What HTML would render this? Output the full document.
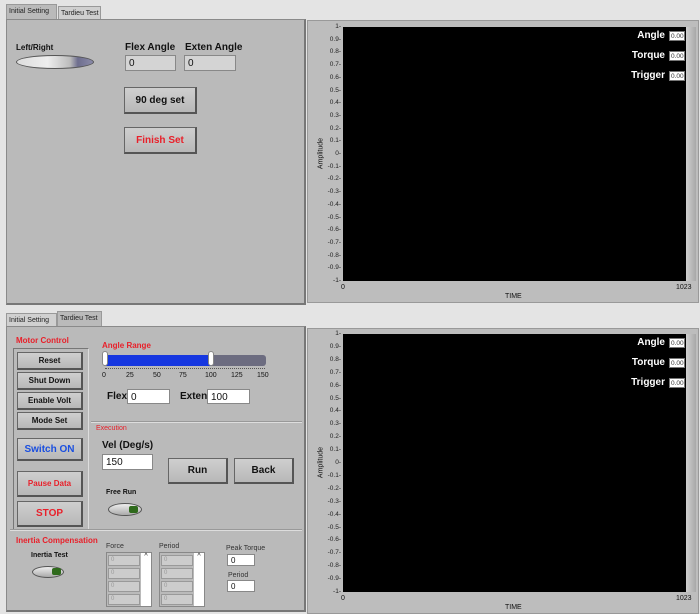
<!DOCTYPE html>
<html><head><meta charset="utf-8"><style>
*{box-sizing:border-box;margin:0;padding:0}
body{width:700px;height:614px;background:#e4e4e4;position:relative;overflow:hidden;font-family:"Liberation Sans",sans-serif;color:#111}
.a{position:absolute}
.panel{position:absolute;background:#bababa;border:1px solid #8a8a8a;border-right:2px solid #777;border-bottom:2px solid #777}
.tab{position:absolute;font-size:7px;padding:3px 2px;border:1px solid #999;border-bottom:none;background:#d0d0d0;color:#222;white-space:nowrap;overflow:hidden}
.tab.on{background:#bababa}
.btn{position:absolute;background:linear-gradient(#cfcfcf,#b8b8b8);border:1px solid #666;border-right:2px solid #555;border-bottom:2px solid #555;font-weight:bold;display:flex;align-items:center;justify-content:center;font-size:9px}
.inp{position:absolute;background:#fff;border:1px solid #888;font-size:10px;padding:1px 3px;line-height:14px}
.lbl{position:absolute;font-weight:bold;font-size:10px;white-space:nowrap}
.red{color:#e8202a}
.graph{position:absolute;background:#bdbdbd;border:1px solid #999}
.plot{position:absolute;background:#000}
.yt{position:absolute;font-size:6.5px;color:#222;text-align:right;width:30px}
.leg{position:absolute;color:#fff;font-weight:bold;font-size:10px;text-align:right;width:60px}
.lv{position:absolute;background:#fff;border:1px solid #777;font-size:6.5px;width:16px;height:10px;line-height:9px;padding-left:1px;color:#333}
.toggle{position:absolute;border-radius:50%;border:1px solid #555;background:linear-gradient(#eee,#aaa)}
.arr{position:absolute;background:#ccc;border:1px solid #999;font-size:6px;color:#999;padding-left:2px;line-height:9px;height:11px}
</style></head><body>

<!-- top tabs -->
<div class="tab on" style="left:6px;top:4px;width:51px;height:16px;">Initial Setting</div>
<div class="tab" style="left:58px;top:6px;width:43px;height:13px;">Tardieu Test</div>
<div class="panel" style="left:6px;top:19px;width:300px;height:286px;"></div>
<div class="lbl" style="left:16px;top:43px;font-size:8px">Left/Right</div>
<div class="toggle" style="left:16px;top:55px;width:78px;height:14px;background:linear-gradient(90deg,#ddd 0%,#eee 40%,#bbb 70%,#6e6e8e 80%,#8a8aa8 100%)"></div>
<div class="lbl" style="left:125px;top:42px;">Flex Angle</div>
<div class="lbl" style="left:185px;top:42px;">Exten Angle</div>
<div class="inp" style="left:125px;top:55px;width:51px;height:16px;background:#d4d4d4">0</div>
<div class="inp" style="left:184px;top:55px;width:52px;height:16px;background:#d4d4d4">0</div>
<div class="btn" style="left:124px;top:87px;width:73px;height:27px;font-size:10px">90 deg set</div>
<div class="btn red" style="left:124px;top:127px;width:73px;height:27px;font-size:10px">Finish Set</div>

<!-- bottom tabs -->
<div class="tab" style="left:6px;top:313px;width:51px;height:13px;">Initial Setting</div>
<div class="tab on" style="left:57px;top:311px;width:45px;height:16px;">Tardieu Test</div>
<div class="panel" style="left:6px;top:326px;width:300px;height:286px;"></div>
<div class="lbl red" style="left:16px;top:336px;font-size:8px">Motor Control</div>
<div class="a" style="left:13px;top:348px;width:76px;height:183px;border:1px solid #777;border-right-color:#ddd;border-bottom-color:#ddd"></div>
<div class="btn" style="left:17px;top:352px;width:66px;height:18px;font-size:8px">Reset</div>
<div class="btn" style="left:17px;top:372px;width:66px;height:18px;font-size:8px">Shut Down</div>
<div class="btn" style="left:17px;top:392px;width:66px;height:18px;font-size:8px">Enable Volt</div>
<div class="btn" style="left:17px;top:412px;width:66px;height:18px;font-size:8px">Mode Set</div>
<div class="btn" style="left:17px;top:438px;width:66px;height:23px;color:#1a4fe0;font-size:10px">Switch ON</div>
<div class="btn red" style="left:17px;top:471px;width:66px;height:26px;font-size:8px">Pause Data</div>
<div class="btn red" style="left:17px;top:501px;width:66px;height:26px;font-size:10px">STOP</div>

<div class="lbl red" style="left:102px;top:341px;font-size:8px">Angle Range</div>
<div class="a" style="left:104px;top:355px;width:162px;height:11px;background:#6c6c80;border-radius:3px"></div>
<div class="a" style="left:104px;top:355px;width:107px;height:11px;background:#1637e0;border-radius:3px 0 0 3px"></div>
<div class="a" style="left:102px;top:351px;width:6px;height:15px;background:#fff;border-radius:3px;border:1px solid #888"></div>
<div class="a" style="left:208px;top:351px;width:6px;height:15px;background:#fff;border-radius:3px;border:1px solid #888"></div>
<div class="a" style="left:105px;top:368px;width:160px;border-top:1px dotted #555;height:2px"></div>
<div class="a" style="left:102px;top:372px;font-size:7px;width:170px;height:10px">
<span class="a" style="left:0">0</span><span class="a" style="left:24px">25</span><span class="a" style="left:51px">50</span><span class="a" style="left:77px">75</span><span class="a" style="left:103px">100</span><span class="a" style="left:129px">125</span><span class="a" style="left:155px">150</span></div>
<div class="lbl" style="left:107px;top:391px;">Flex</div>
<div class="inp" style="left:127px;top:389px;width:43px;height:15px">0</div>
<div class="lbl" style="left:180px;top:391px;">Exten</div>
<div class="inp" style="left:207px;top:389px;width:43px;height:15px">100</div>
<div class="a" style="left:91px;top:421px;width:211px;border-top:1px solid #999;border-bottom:1px solid #ddd"></div>
<div class="lbl red" style="left:96px;top:425px;font-size:7px;font-weight:normal">Execution</div>
<div class="lbl" style="left:102px;top:440px;">Vel (Deg/s)</div>
<div class="inp" style="left:102px;top:454px;width:51px;height:16px">150</div>
<div class="btn" style="left:168px;top:458px;width:60px;height:26px;font-size:10px">Run</div>
<div class="btn" style="left:234px;top:458px;width:60px;height:26px;font-size:10px">Back</div>
<div class="lbl" style="left:106px;top:489px;font-size:7px">Free Run</div>
<div class="toggle" style="left:108px;top:503px;width:34px;height:13px"></div>
<div class="a" style="left:129px;top:506px;width:9px;height:7px;background:#2f6a1c;border-radius:2px"></div>
<div class="a" style="left:10px;top:529px;width:292px;border-top:1px solid #999;border-bottom:1px solid #ddd"></div>
<div class="lbl red" style="left:16px;top:536px;font-size:8px">Inertia Compensation</div>
<div class="lbl" style="left:31px;top:552px;font-size:7px">Inertia Test</div>
<div class="toggle" style="left:32px;top:566px;width:32px;height:12px"></div>
<div class="a" style="left:52px;top:568px;width:9px;height:7px;background:#2f6a1c;border-radius:2px"></div>
<div class="a" style="left:106px;top:543px;font-size:7px;color:#333">Force</div>
<div class="a" style="left:159px;top:543px;font-size:7px;color:#333">Period</div>
<div class="a" style="left:106px;top:552px;width:46px;height:55px;border:1px solid #888"></div>
<div class="a" style="left:141px;top:553px;width:10px;height:53px;background:#fff;font-size:7px;text-align:center">^</div>
<div class="a" style="left:159px;top:552px;width:46px;height:55px;border:1px solid #888"></div>
<div class="a" style="left:194px;top:553px;width:10px;height:53px;background:#fff;font-size:7px;text-align:center">^</div>
<div class="arr" style="left:108px;top:555px;width:32px">0</div><div class="arr" style="left:108px;top:568px;width:32px">0</div><div class="arr" style="left:108px;top:581px;width:32px">0</div><div class="arr" style="left:108px;top:594px;width:32px">0</div>
<div class="arr" style="left:161px;top:555px;width:32px">0</div><div class="arr" style="left:161px;top:568px;width:32px">0</div><div class="arr" style="left:161px;top:581px;width:32px">0</div><div class="arr" style="left:161px;top:594px;width:32px">0</div>
<div class="a" style="left:226px;top:545px;font-size:7px;color:#333">Peak Torque</div>
<div class="inp" style="left:227px;top:554px;width:28px;height:12px;font-size:8px;line-height:9px;padding-left:3px">0</div>
<div class="a" style="left:228px;top:572px;font-size:7px;color:#333">Period</div>
<div class="inp" style="left:227px;top:580px;width:28px;height:12px;font-size:8px;line-height:9px;padding-left:3px">0</div>

<div id="g"></div>
<script>
var h='';
[[20,27,281],[328,334,592]].forEach(function(g){
 var top=g[0],pt=g[1],pb=g[2];
 h+='<div class="graph" style="left:307px;top:'+top+'px;width:392px;height:'+(pb-top+22)+'px"></div>';
 h+='<div class="plot" style="left:343px;top:'+pt+'px;width:343px;height:'+(pb-pt)+'px"></div>';
 h+='<div class="a" style="left:686px;top:'+pt+'px;width:10px;height:'+(pb-pt)+'px;background:linear-gradient(90deg,#d0d0d0,#a8a8a8)"></div>';
 for(var i=0;i<=20;i++){var v=(1-i*0.1);var s=Math.abs(v)<1e-9?'0':(Math.round(v*10)/10).toString();
  var y=pt+(pb-pt)*i/20;h+='<div class="yt" style="left:311px;top:'+(y-4)+'px">'+s+'-</div>';}
 h+='<div class="a" style="left:301px;top:'+((pt+pb)/2-4)+'px;font-size:7px;transform:rotate(-90deg);transform-origin:center;width:40px;text-align:center">Amplitude</div>';
 h+='<div class="a" style="left:341px;top:'+(pb+3)+'px;font-size:7px">0</div>';
 h+='<div class="a" style="left:676px;top:'+(pb+3)+'px;font-size:7px">1023</div>';
 h+='<div class="a" style="left:505px;top:'+(pb+12)+'px;font-size:7px">TIME</div>';
 ['Angle','Torque','Trigger'].forEach(function(n,k){var y=pt+3+k*20;
  h+='<div class="leg" style="left:605px;top:'+y+'px">'+n+'</div><div class="lv" style="left:669px;top:'+(y+1)+'px">0.00</div>';});
});
document.getElementById('g').innerHTML=h;
</script>
</body></html>
